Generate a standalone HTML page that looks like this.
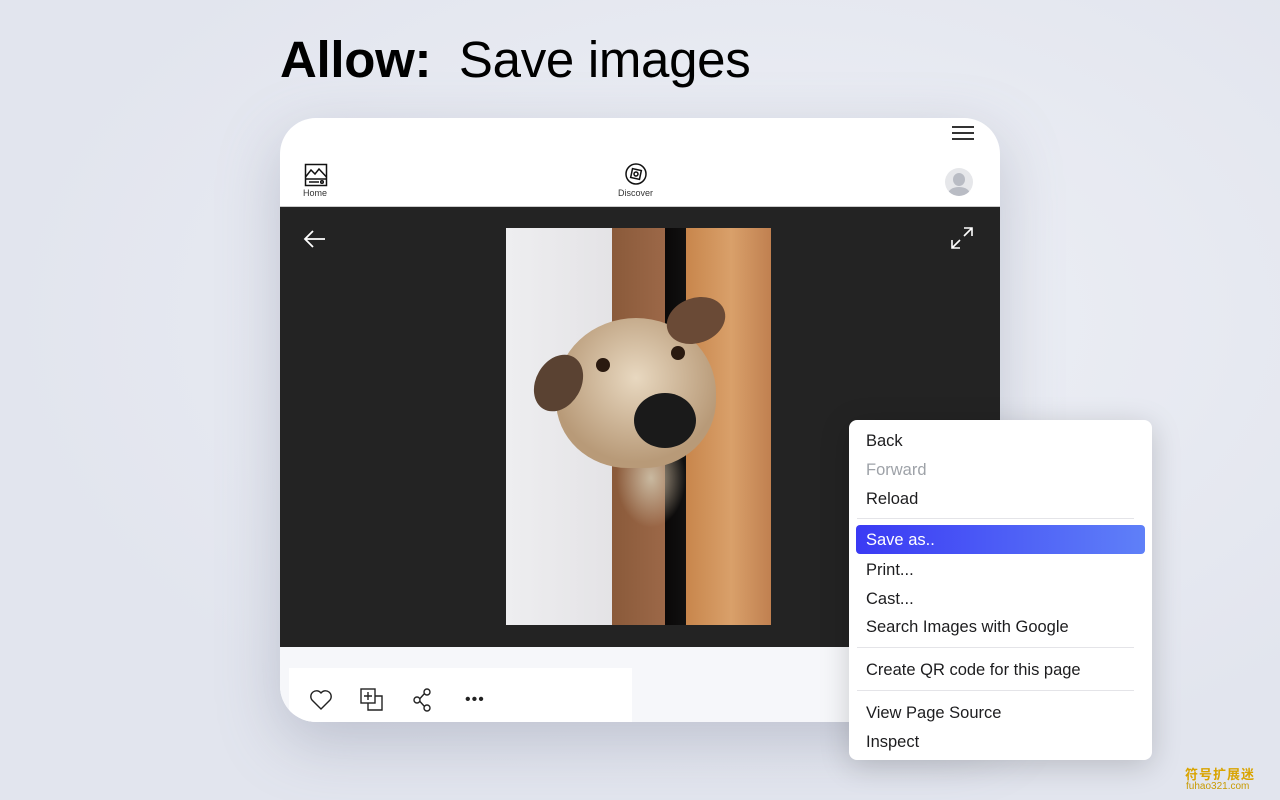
<!DOCTYPE html><html><head><style>
body{margin:0;width:1280px;height:800px;overflow:hidden;background:radial-gradient(ellipse at 60% 40%,#eef0f6,#e2e5ee 70%);font-family:"Liberation Sans",sans-serif;position:relative}
.a{position:absolute}
.card{left:280px;top:118px;width:720px;height:604px;border-radius:36px;background:#fff;overflow:hidden;box-shadow:0 20px 60px rgba(120,125,150,.35)}
.menu{left:849px;top:420px;width:303px;height:340px;background:#fff;border-radius:8px;box-shadow:0 6px 30px rgba(0,0,0,.18);font-size:16.5px;color:#1d1d1f}
.it{position:absolute;left:17px}
.sep{position:absolute;left:8px;right:18px;height:1px;background:#e4e4e8}
</style></head><body>
<div class="a" style="left:280px;top:30px;font-size:51px;color:#000;letter-spacing:-0.3px"><b>Allow:</b>&nbsp; Save images</div>
<div class="a card">
 <div class="a" style="left:672px;top:8px;width:22px;height:2px;background:#333;box-shadow:0 6px 0 #333,0 12px 0 #333"></div>
 <svg class="a" style="left:24px;top:45px" width="24" height="24" viewBox="0 0 24 24" fill="none" stroke="#111" stroke-width="1.5"><rect x="1.5" y="1.5" width="21" height="21"/><path d="M1.5 14 L7 7 L11 11 L15 6 L22.5 14 M1.5 16 H22.5 M5 19 H15"/><circle cx="18" cy="19" r="1.3"/></svg>
 <div class="a" style="left:23px;top:70px;font-size:9px;color:#333">Home</div>
 <svg class="a" style="left:345px;top:45px" width="22" height="22" viewBox="0 0 22 22" fill="none" stroke="#111" stroke-width="1.5"><circle cx="11" cy="11" r="10"/><rect x="6.5" y="6.5" width="9" height="9" transform="rotate(12 11 11)"/><circle cx="11" cy="11" r="2"/></svg>
 <div class="a" style="left:338px;top:70px;font-size:9px;color:#333">Discover</div>
 <div class="a" style="left:665px;top:50px;width:28px;height:28px;border-radius:50%;background:#e6e7ea;overflow:hidden"><div class="a" style="left:8px;top:5px;width:12px;height:13px;border-radius:50%;background:#b9bcc4"></div><div class="a" style="left:3px;top:19px;width:22px;height:14px;border-radius:50%;background:#b9bcc4"></div></div>
 <div class="a" style="left:0;top:88px;width:720px;height:1px;background:#ccc"></div>
 <div class="a" style="left:0;top:89px;width:720px;height:440px;background:#232323"></div>
 <svg class="a" style="left:23px;top:110px" width="24" height="22" viewBox="0 0 24 22" fill="none" stroke="#fff" stroke-width="1.8"><path d="M22 11H2M10 3L2 11l8 8"/></svg>
 <svg class="a" style="left:670px;top:108px" width="24" height="24" viewBox="0 0 24 24" fill="none" stroke="#fff" stroke-width="1.6"><path d="M14 2h8v8M22 2l-8 8M10 22H2v-8M2 22l8-8"/></svg>
 <div class="a" style="left:226px;top:110px;width:265px;height:397px;overflow:hidden;background:linear-gradient(90deg,#eeeef0 0,#e4e3e6 40%,#8a5a3a 40%,#9c6848 60%,#0a0808 60%,#111 68%,#c8864c 68%,#d9a06a 85%,#c08050 100%)">
  <div class="a" style="left:110px;top:200px;width:70px;height:100px;border-radius:40%;background:radial-gradient(#c9b9a0,rgba(150,130,110,0) 70%)"></div>
  <div class="a" style="left:50px;top:90px;width:160px;height:150px;border-radius:50% 50% 45% 45%;background:radial-gradient(circle at 50% 40%,#e8d8c0,#b89a78 70%)"></div>
  <div class="a" style="left:30px;top:125px;width:45px;height:60px;border-radius:50%;background:#5a4232;transform:rotate(30deg)"></div>
  <div class="a" style="left:160px;top:70px;width:60px;height:45px;border-radius:50%;background:#6a4a36;transform:rotate(-20deg)"></div>
  <div class="a" style="left:128px;top:165px;width:62px;height:55px;border-radius:50%;background:#1a1a1a"></div>
  <div class="a" style="left:90px;top:130px;width:14px;height:14px;border-radius:50%;background:#2a1a10"></div>
  <div class="a" style="left:165px;top:118px;width:14px;height:14px;border-radius:50%;background:#2a1a10"></div>
 </div>
 <div class="a" style="left:0;top:529px;width:720px;height:75px;background:#f6f7fa"></div>
 <div class="a" style="left:9px;top:550px;width:343px;height:54px;background:#fff"></div>
 <svg class="a" style="left:29px;top:571px" width="24" height="22" viewBox="0 0 24 22" fill="none" stroke="#222" stroke-width="1.4"><path d="M12 20 L3 11 A5 5 0 0 1 12 4 A5 5 0 0 1 21 11 Z"/></svg>
 <svg class="a" style="left:80px;top:570px" width="24" height="24" viewBox="0 0 24 24" fill="none" stroke="#222" stroke-width="1.4"><rect x="1" y="1" width="14" height="14"/><path d="M8 4v8M4 8h8M15 8h7v14H8v-7"/></svg>
 <svg class="a" style="left:132px;top:570px" width="22" height="24" viewBox="0 0 22 24" fill="none" stroke="#222" stroke-width="1.4"><circle cx="15" cy="4" r="3"/><circle cx="15" cy="20" r="3"/><circle cx="5" cy="12" r="3"/><path d="M8 10.5l4.5-5M8 13.5l4.5 5"/></svg>
 <div class="a" style="left:185px;top:580px;font-size:16px;color:#222;letter-spacing:1px;line-height:4px">•••</div>
</div>
<div class="a menu">
 <div class="it" style="top:12px">Back</div>
 <div class="it" style="top:41px;color:#9ea2a8">Forward</div>
 <div class="it" style="top:70px">Reload</div>
 <div class="sep" style="top:98px"></div>
 <div class="a" style="left:7px;top:105px;width:289px;height:29px;border-radius:4px;background:linear-gradient(90deg,#3a3af4,#5f80f8)"></div>
 <div class="it" style="top:111px;color:#fff">Save as..</div>
 <div class="it" style="top:141px">Print...</div>
 <div class="it" style="top:170px">Cast...</div>
 <div class="it" style="top:198px">Search Images with Google</div>
 <div class="sep" style="top:227px"></div>
 <div class="it" style="top:241px">Create QR code for this page</div>
 <div class="sep" style="top:270px"></div>
 <div class="it" style="top:284px">View Page Source</div>
 <div class="it" style="top:313px">Inspect</div>
</div>
<div class="a" style="left:1185px;top:764px;font-size:13px;font-weight:bold;color:#d9a400;font-family:'Noto Sans CJK SC',sans-serif;letter-spacing:1px">符号扩展迷</div>
<div class="a" style="left:1186px;top:781px;font-size:10px;color:#c89a00">fuhao321.com</div>
</body></html>
